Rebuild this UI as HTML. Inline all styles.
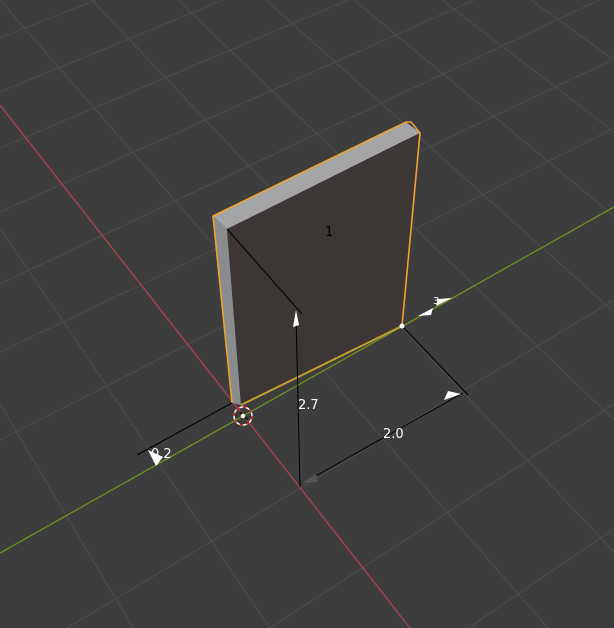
<!DOCTYPE html>
<html><head><meta charset="utf-8"><style>
html,body{margin:0;padding:0;background:#3d3d3d;width:614px;height:628px;overflow:hidden}
svg{display:block;position:absolute;left:0;top:0}
text{font-family:"DejaVu Sans","Liberation Sans",sans-serif}
</style></head><body>
<svg width="614" height="628" viewBox="0 0 614 628" xmlns="http://www.w3.org/2000/svg">
<rect width="614" height="628" fill="#3d3d3d"/>
<g stroke="#4b4b4b" stroke-width="1.2" fill="none">
<!-- red family -->
<line x1="531" y1="0" x2="614" y2="60"/>
<line x1="442" y1="0" x2="614" y2="132"/>
<line x1="354" y1="0" x2="614" y2="216"/>
<line x1="266" y1="0" x2="614" y2="312"/>
<line x1="178" y1="0" x2="614" y2="420"/>
<line x1="92" y1="0" x2="614" y2="552"/>
<line x1="0" y1="0" x2="548" y2="628"/>
<line x1="0" y1="228" x2="270" y2="628"/>
<line x1="0" y1="404" x2="133" y2="628"/>
<!-- green family -->
<line x1="0" y1="38" x2="96" y2="0"/>
<line x1="0" y1="92" x2="223" y2="0"/>
<line x1="0" y1="148" x2="348" y2="0"/>
<line x1="0" y1="212" x2="474" y2="0"/>
<line x1="0" y1="284" x2="599" y2="0"/>
<line x1="0" y1="352" x2="614" y2="59"/>
<line x1="0" y1="440" x2="614" y2="128"/>
<line x1="67" y1="628" x2="614" y2="300"/>
<line x1="270" y1="628" x2="614" y2="404"/>
<line x1="468" y1="628" x2="614" y2="529"/>
</g>
<line x1="0" y1="105" x2="410" y2="628" stroke="#a4404e" stroke-width="1.4"/>
<line x1="0" y1="553" x2="614" y2="207" stroke="#6b8e23" stroke-width="1.4"/>
<!-- object -->
<polygon points="213,216 406,122 420,133 227,229" fill="#a3a5a7"/>
<polygon points="213,216 227,229 241,405 232,403" fill="#8a8b8d"/>
<polygon points="227,229 420,133 402,326 241,405" fill="#3c3735"/>
<polyline points="232,403 213,216 406,122 411,122 420,133 402,326" fill="none" stroke="#f0a030" stroke-width="1.6"/>
<line x1="241" y1="405" x2="402" y2="326" stroke="#b8a030" stroke-width="2"/>
<line x1="241" y1="405" x2="402" y2="326" stroke="#e09a30" stroke-width="1" stroke-dasharray="2,2"/>
<!-- dimension lines -->
<g stroke="#000" stroke-width="1" fill="none">
<line x1="227" y1="229" x2="302" y2="314"/>
<line x1="296" y1="314" x2="300" y2="487"/>
<line x1="305" y1="482" x2="463" y2="393"/>
<line x1="402" y1="326" x2="468" y2="395"/>
<line x1="232" y1="403" x2="137" y2="455"/>
<line x1="240" y1="412" x2="248" y2="420"/>
</g>
<polygon points="296,310 293,327 299,325" fill="#fff"/>
<polygon points="461,394 444,400 448,391" fill="#fff"/>
<polygon points="302,483 316,474 318,482" fill="#555"/>
<polygon points="148,450 156,466 163,457" fill="#fff"/>
<polygon points="418,316 433,308 431,315" fill="#fff"/>
<polygon points="452,298 436,306 438,299" fill="#fff"/>
<circle cx="402" cy="326" r="2.5" fill="#fff"/>
<!-- 3d cursor -->
<circle cx="243" cy="416" r="9" fill="none" stroke="#fff" stroke-width="1.5"/>
<circle cx="243" cy="416" r="9" fill="none" stroke="#d02020" stroke-width="1.5" stroke-dasharray="3.5,3.5"/>
<circle cx="243" cy="416" r="2.2" fill="#fff"/>
<text x="325" y="236" font-size="13" fill="#000">1</text>
<text x="298" y="409" font-size="13" fill="#fff">2.7</text>
<text x="383" y="438" font-size="13" fill="#fff">2.0</text>
<text x="151" y="458" font-size="13" fill="#fff">0.2</text>
<text x="433" y="304" font-size="10" fill="#fff">3</text>
</svg>
</body></html>
